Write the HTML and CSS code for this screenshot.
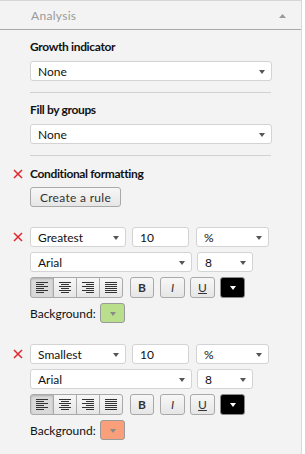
FILE: index.html
```html
<!DOCTYPE html>
<html lang="en">
<head>
  <meta charset="UTF-8">
  <title>Analysis</title>
  <link rel="stylesheet" href="styles.css">
</head>
<body>
  <div class="panel">
    <div class="panel-header">
      <span class="panel-title">Analysis</span>
      <svg class="collapse" width="7" height="4" viewBox="0 0 7 4"><path d="M0 4 L3.5 0 L7 4 Z" fill="#9a9a9a"/></svg>
    </div>

    <div class="section first">
      <div class="label">Growth indicator</div>
      <div class="select wide"><span>None</span><i class="caret"></i></div>
    </div>
    <div class="divider"></div>

    <div class="section">
      <div class="label">Fill by groups</div>
      <div class="select wide"><span>None</span><i class="caret"></i></div>
    </div>
    <div class="divider last"></div>

    <div class="line-row cond-head">
      <div class="gutter">
        <svg class="remove" width="10" height="10" viewBox="0 0 10 10"><path d="M1 1 L9 9 M9 1 L1 9" stroke="#e0262b" stroke-width="1.5"/></svg>
      </div>
      <div class="label">Conditional formatting</div>
    </div>
    <div class="section">
      <button class="btn create">Create a rule</button>
    </div>

    <div class="rule">
      <div class="line-row">
        <div class="gutter">
          <svg class="remove" width="10" height="10" viewBox="0 0 10 10"><path d="M1 1 L9 9 M9 1 L1 9" stroke="#e0262b" stroke-width="1.5"/></svg>
        </div>
        <div class="select w-kind"><span>Greatest</span><i class="caret"></i></div>
        <div class="input w-count">10</div>
        <div class="select w-unit"><span>%</span><i class="caret"></i></div>
      </div>
      <div class="line-row indent">
        <div class="select w-font"><span>Arial</span><i class="caret"></i></div>
        <div class="select w-size"><span>8</span><i class="caret"></i></div>
      </div>
      <div class="line-row indent tools">
        <div class="btn-group">
          <button class="btn icon pressed"><svg width="12" height="11" viewBox="0 0 12 11"><path d="M0 .5h12M0 2.5h8M0 4.5h12M0 6.5h8M0 8.5h12M0 10.5h8" stroke="#333"/></svg></button>
          <button class="btn icon"><svg width="12" height="11" viewBox="0 0 12 11"><path d="M0 .5h12M2 2.5h8M0 4.5h12M2 6.5h8M0 8.5h12M2 10.5h8" stroke="#333"/></svg></button>
          <button class="btn icon"><svg width="12" height="11" viewBox="0 0 12 11"><path d="M0 .5h12M4 2.5h8M0 4.5h12M4 6.5h8M0 8.5h12M4 10.5h8" stroke="#333"/></svg></button>
          <button class="btn icon"><svg width="12" height="11" viewBox="0 0 12 11"><path d="M0 .5h12M0 2.5h12M0 4.5h12M0 6.5h12M0 8.5h12M0 10.5h12" stroke="#333"/></svg></button>
        </div>
        <button class="btn icon style-b">B</button>
        <button class="btn icon style-i">I</button>
        <button class="btn icon style-u">U</button>
        <button class="btn icon color-pick"><i class="caret white"></i></button>
      </div>
      <div class="line-row indent bg-row">
        <span class="bg-label">Background:</span>
        <button class="btn icon swatch green"><i class="caret"></i></button>
      </div>
    </div>

    <div class="rule">
      <div class="line-row">
        <div class="gutter">
          <svg class="remove" width="10" height="10" viewBox="0 0 10 10"><path d="M1 1 L9 9 M9 1 L1 9" stroke="#e0262b" stroke-width="1.5"/></svg>
        </div>
        <div class="select w-kind"><span>Smallest</span><i class="caret"></i></div>
        <div class="input w-count">10</div>
        <div class="select w-unit"><span>%</span><i class="caret"></i></div>
      </div>
      <div class="line-row indent">
        <div class="select w-font"><span>Arial</span><i class="caret"></i></div>
        <div class="select w-size"><span>8</span><i class="caret"></i></div>
      </div>
      <div class="line-row indent tools">
        <div class="btn-group">
          <button class="btn icon pressed"><svg width="12" height="11" viewBox="0 0 12 11"><path d="M0 .5h12M0 2.5h8M0 4.5h12M0 6.5h8M0 8.5h12M0 10.5h8" stroke="#333"/></svg></button>
          <button class="btn icon"><svg width="12" height="11" viewBox="0 0 12 11"><path d="M0 .5h12M2 2.5h8M0 4.5h12M2 6.5h8M0 8.5h12M2 10.5h8" stroke="#333"/></svg></button>
          <button class="btn icon"><svg width="12" height="11" viewBox="0 0 12 11"><path d="M0 .5h12M4 2.5h8M0 4.5h12M4 6.5h8M0 8.5h12M4 10.5h8" stroke="#333"/></svg></button>
          <button class="btn icon"><svg width="12" height="11" viewBox="0 0 12 11"><path d="M0 .5h12M0 2.5h12M0 4.5h12M0 6.5h12M0 8.5h12M0 10.5h12" stroke="#333"/></svg></button>
        </div>
        <button class="btn icon style-b">B</button>
        <button class="btn icon style-i">I</button>
        <button class="btn icon style-u">U</button>
        <button class="btn icon color-pick"><i class="caret white"></i></button>
      </div>
      <div class="line-row indent bg-row">
        <span class="bg-label">Background:</span>
        <button class="btn icon swatch orange"><i class="caret"></i></button>
      </div>
    </div>
  </div>
</body>
</html>
```

FILE: styles.css
```css
body {
  margin: 0;
  background-color: #ffffff;
  font-family: Lato, 'Open Sans', sans-serif;
  font-size: 12px;
  color: #111111;
}
.panel {
  width: 302px;
  height: 454px;
  background-color: #f3f3f3;
  border-right: 1px solid #d9d9d9;
  box-sizing: border-box;
}
.panel-header {
  height: 30px;
  box-sizing: border-box;
  border-top: 1px solid #d6d6d6;
  border-bottom: 1px solid #a9a9a9;
  display: flex;
  align-items: center;
  justify-content: space-between;
  padding: 0 15px 0 31px;
}
.panel-title {
  color: #9a9a9a;
  font-size: 12px;
  letter-spacing: 0.3px;
}
.collapse {
  margin-top: 2px;
}
.section {
  padding-left: 30px;
}
.section.first {
  padding-top: 9px;
}
.label {
  font-weight: bold;
  font-size: 12px;
  line-height: 16px;
  margin-bottom: 6px;
  letter-spacing: -0.35px;
}
.divider {
  height: 1px;
  background-color: #d2d2d2;
  margin: 11px 30px 9px 30px;
}
.divider.last {
  margin-bottom: 10px;
}
.select, .input {
  height: 20px;
  box-sizing: border-box;
  background-color: #ffffff;
  border: 1px solid #d3d3d3;
  border-radius: 3px;
  display: flex;
  align-items: center;
  justify-content: space-between;
  padding: 0 6px 0 7px;
}
.wide {
  width: 242px;
}
.caret {
  width: 0;
  height: 0;
  border-left: 3.5px solid transparent;
  border-right: 3.5px solid transparent;
  border-top: 4px solid #555555;
  margin-top: 1px;
}
.caret.white {
  border-top-color: #ffffff;
}
.line-row {
  display: flex;
  align-items: center;
}
.indent {
  padding-left: 30px;
}
.gutter {
  width: 30px;
  flex-shrink: 0;
  display: flex;
  padding-left: 13px;
  box-sizing: border-box;
}
.cond-head .label {
  margin-bottom: 0;
}
.cond-head {
  margin-bottom: 5px;
}
.btn {
  font-family: inherit;
  font-size: 12px;
  color: #333333;
  height: 20px;
  box-sizing: border-box;
  border: 1px solid #a9a9a9;
  border-radius: 3px;
  background: linear-gradient(#f7f7f7, #e6e6e6);
  padding: 0;
  margin: 0;
  display: flex;
  align-items: center;
  justify-content: center;
}
.create {
  width: 91px;
  letter-spacing: 0.3px;
}
.rule {
  margin-top: 20px;
}
.rule + .rule {
  margin-top: 21px;
}
.rule .line-row + .line-row {
  margin-top: 5px;
}
.w-kind {
  width: 96px;
}
.w-count {
  width: 57px;
  margin-left: 6px;
}
.w-unit {
  width: 73px;
  margin-left: 7px;
}
.w-font {
  width: 162px;
}
.w-size {
  width: 56px;
  margin-left: 5px;
}
.tools .btn {
  height: 21px;
}
.btn-group {
  display: flex;
  width: 95px;
}
.btn-group .btn {
  width: 24px;
  border-radius: 0;
  margin-left: -1px;
}
.btn-group .btn:first-child {
  margin-left: 0;
  border-radius: 3px 0 0 3px;
}
.btn-group .btn:last-child {
  border-radius: 0 3px 3px 0;
}
.btn.pressed {
  background: #d9d9d9;
  box-shadow: inset 0 1px 2px rgba(0, 0, 0, 0.2);
}
.style-b {
  width: 24px;
  margin-left: 5px;
  font-weight: bold;
}
.style-i {
  width: 25px;
  margin-left: 6px;
  font-style: italic;
}
.style-u {
  width: 25px;
  margin-left: 5px;
  text-decoration: underline;
}
.color-pick {
  width: 25px;
  margin-left: 5px;
  background: #000000;
  border-color: #8a8a8a;
}
.rule .bg-row {
  margin-top: 4px;
}
.bg-label {
  width: 70px;
}
.swatch {
  width: 25px;
  height: 20px;
  border-color: #9a9a9a;
}
.swatch .caret {
  border-top-color: #8a8a8a;
}
.green {
  background: #b9df8c;
}
.orange {
  background: #f9a07a;
}
```
